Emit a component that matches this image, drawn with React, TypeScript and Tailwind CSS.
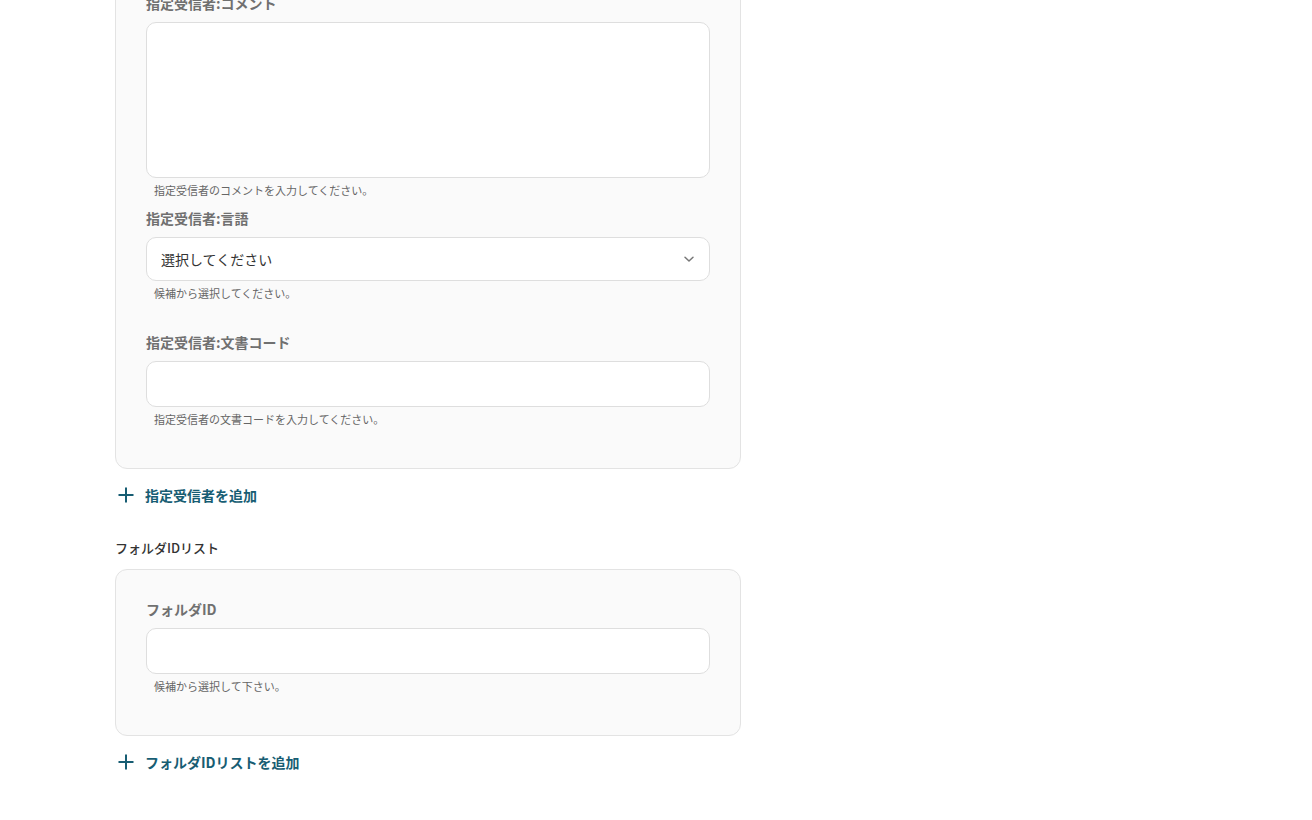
import React from 'react';

const font = "font-['Noto_Sans_CJK_JP','Noto_Sans',sans-serif]";

const labelClasses = "block h-5 text-[14px] leading-5 font-bold text-[#707070]";
const helperClasses = "block h-4 pl-2 text-[11px] leading-4 text-[#666666]";
const boxClasses = "block w-full bg-white border border-[#dedede] rounded-[10px]";

const Field: React.FC<{ label: string; helper: string; children: React.ReactNode; gapAfter?: string }> = ({ label, helper, children, gapAfter }) => (
  <div className={gapAfter}>
    <label className={labelClasses}>{label}</label>
    <div className="mt-[9px]">{children}</div>
    <p className={`${helperClasses} mt-[4px]`}>{helper}</p>
  </div>
);

const AddButton: React.FC<{ text: string; className?: string }> = ({ text, className }) => (
  <button type="button" className={`flex items-center h-5 pl-[3px] text-[#175d73] ${className ?? ''}`}>
    <svg width="16" height="16" viewBox="0 0 16 16" fill="none" stroke="currentColor" strokeWidth="2" strokeLinecap="square">
      <path d="M8 1.5v13M1.5 8h13" />
    </svg>
    <span className="ml-[11px] text-[14px] leading-5 font-bold">{text}</span>
  </button>
);

const App: React.FC = () => {
  return (
    <div className={`${font} w-[1312px] h-[820px] overflow-hidden bg-white`}>
      <div className="ml-[115px] w-[626px] -mt-[38px]">
        <div className="bg-[#fafafa] border border-[#e3e3e3] rounded-[12px] px-[30px] pt-[30px] pb-[41px]">
          <Field label="指定受信者:コメント" helper="指定受信者のコメントを入力してください。" gapAfter="mb-[10px]">
            <textarea className={`${boxClasses} h-[156px] resize-none outline-none`} />
          </Field>
          <Field label="指定受信者:言語" helper="候補から選択してください。" gapAfter="mb-[31px]">
            <div className={`${boxClasses} h-[44px] flex items-center justify-between pl-[14px] pr-[13px]`}>
              <span className="text-[14px] text-[#333333]">選択してください</span>
              <svg width="14" height="14" viewBox="0 0 14 14" fill="none" stroke="#777" strokeWidth="1.5" strokeLinecap="round" strokeLinejoin="round">
                <path d="M3 5.2l4 3.8 4-3.8" />
              </svg>
            </div>
          </Field>
          <Field label="指定受信者:文書コード" helper="指定受信者の文書コードを入力してください。">
            <input className={`${boxClasses} h-[46px] outline-none`} />
          </Field>
        </div>

        <AddButton text="指定受信者を追加" className="mt-[16px]" />

        <h3 className="mt-[33px] h-5 text-[13px] leading-5 font-medium text-[#333333]">フォルダIDリスト</h3>

        <div className="mt-[11px] bg-[#fafafa] border border-[#e3e3e3] rounded-[12px] px-[30px] pt-[29px] pb-[41px]">
          <Field label="フォルダID" helper="候補から選択して下さい。">
            <input className={`${boxClasses} h-[46px] outline-none`} />
          </Field>
        </div>

        <AddButton text="フォルダIDリストを追加" className="mt-[16px]" />
      </div>
    </div>
  );
};

export default App;
